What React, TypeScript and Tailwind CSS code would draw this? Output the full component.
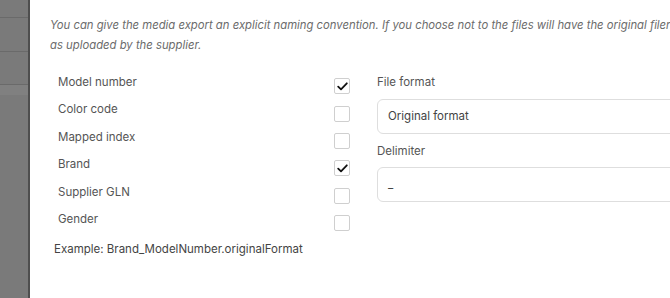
import React from "react";

const rows = [
  { label: "Model number", checked: true },
  { label: "Color code", checked: false },
  { label: "Mapped index", checked: false },
  { label: "Brand", checked: true },
  { label: "Supplier GLN", checked: false },
  { label: "Gender", checked: false },
];

function Check({ checked }: { checked: boolean }) {
  return (
    <div className="w-[16px] h-[16px] border border-[#cfcfcf] rounded-[2px] bg-white flex items-center justify-center">
      {checked && (
        <svg width="11" height="9" viewBox="0 0 11 9">
          <path d="M1.2 4.6 L4 7.3 L9.8 1.3" fill="none" stroke="#111" strokeWidth="1.8" strokeLinecap="round" strokeLinejoin="round" />
        </svg>
      )}
    </div>
  );
}

export default function App() {
  return (
    <div
      className="w-[670px] h-[298px] flex overflow-hidden bg-white"
      style={{ fontFamily: "Inter, 'Noto Sans', sans-serif" }}
    >
      <div className="w-[28px] shrink-0 h-full bg-[#7a7a7a] flex flex-col">
        <div className="h-[18px] border-b border-[#6a6a6a]" />
        <div className="h-[34px] border-b border-[#6a6a6a]" />
        <div className="h-[33px] border-b border-[#6a6a6a]" />
        <div className="h-[10px] bg-[#808080]" />
        <div className="flex-1" />
      </div>
      <div className="w-[2px] shrink-0 h-full bg-[#4e4e4e]" />
      <div className="flex-1 min-w-0 h-full pl-[20px] pt-[15px] overflow-hidden">
        <p className="text-[11.3px] italic leading-[20px] text-[#6b6b6b] whitespace-nowrap">
          You can give the media export an explicit naming convention. If you choose not to the files will have the original filenames
          <br />
          as uploaded by the supplier.
        </p>
        <div className="flex mt-[14px]">
          <div className="flex flex-col w-[327px] shrink-0">
            {rows.map((r) => (
              <div key={r.label} className="flex h-[27.4px] items-center">
                <span className="w-[284px] shrink-0 pl-[8px] text-[11.5px] text-[#555]">{r.label}</span>
                <div className="mt-[7px]">
                  <Check checked={r.checked} />
                </div>
              </div>
            ))}
            <div className="pl-[4px] mt-[8px] text-[11.5px] text-[#444]">
              Example: Brand_ModelNumber.originalFormat
            </div>
          </div>
          <div className="flex-1 flex flex-col min-w-0">
            <div className="h-[27px] flex items-center text-[11.5px] text-[#555]">File format</div>
            <div className="mt-[3px] h-[35px] border border-[#dedede] rounded-[6px] flex items-center pl-[10px] text-[11.5px] text-[#444] w-[330px] shrink-0">
              Original format
            </div>
            <div className="mt-[5px] h-[26px] flex items-center text-[11.5px] text-[#555]">Delimiter</div>
            <div className="mt-[2px] h-[35px] border border-[#dedede] rounded-[6px] flex items-center pl-[10px] text-[11.5px] text-[#444] w-[330px] shrink-0">
              _
            </div>
          </div>
        </div>
      </div>
    </div>
  );
}
